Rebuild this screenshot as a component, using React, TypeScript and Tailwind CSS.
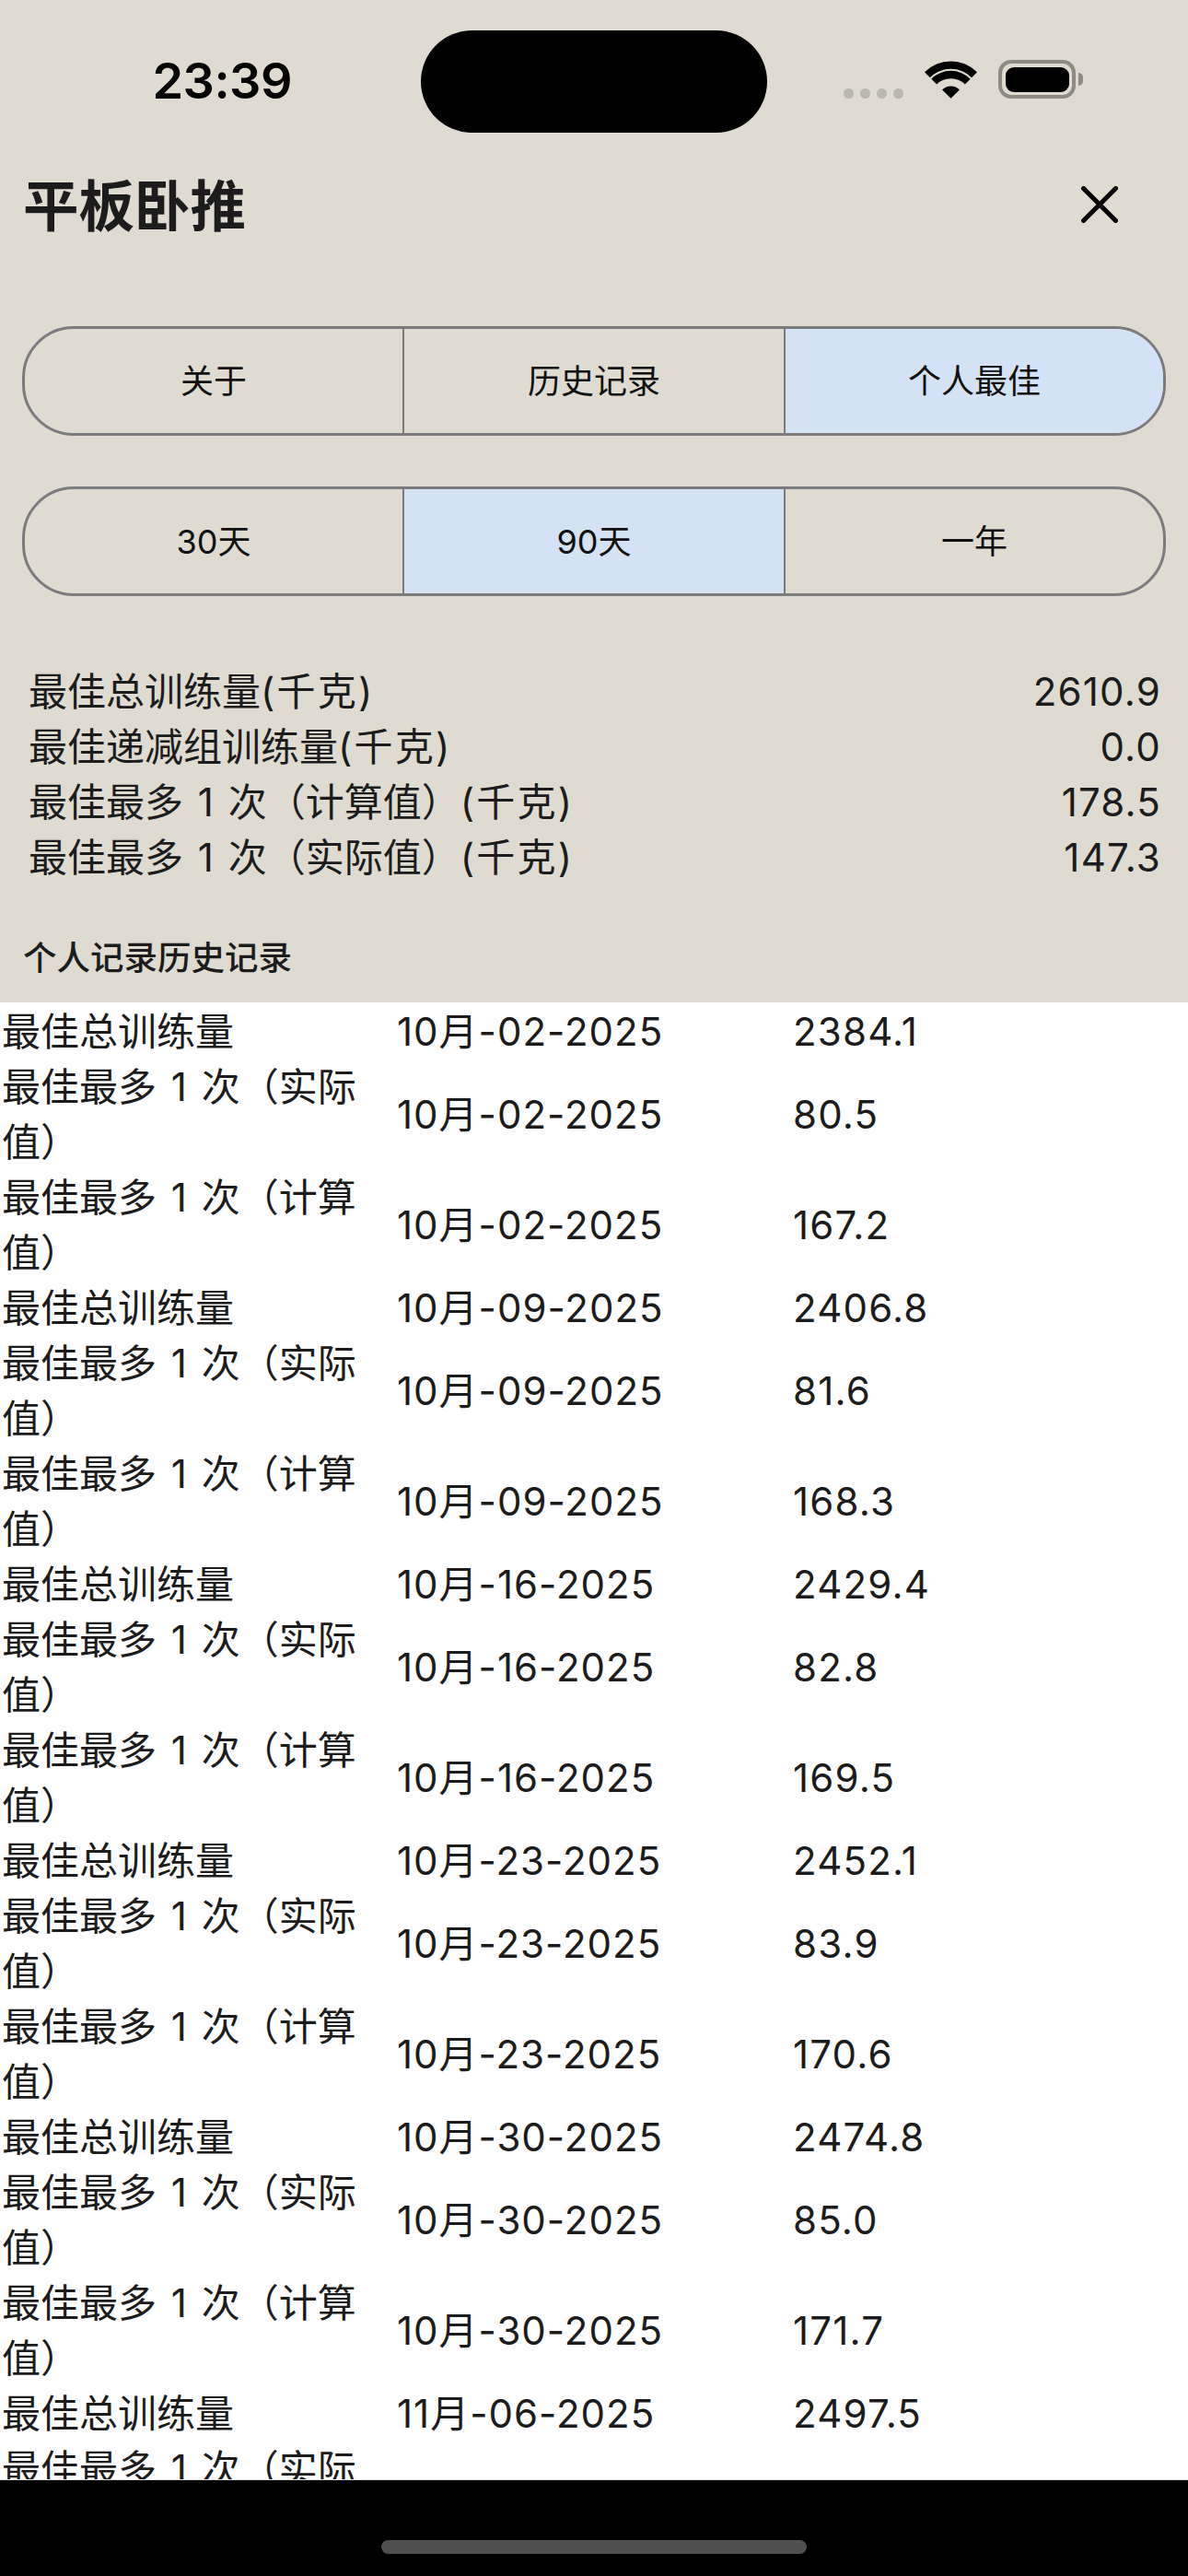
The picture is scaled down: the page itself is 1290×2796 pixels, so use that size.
const font = { fontFamily: '"Inter", "Noto Sans CJK SC", sans-serif' };

function Segments({ items, active }: { items: string[]; active: number }) {
  return (
    <div className="grid h-[119px] w-[1242px] grid-cols-[412px_414px_1fr] overflow-hidden rounded-[56px] border-[3px] border-[#7b7b7d]">
      {items.map((t, i) => (
        <div
          key={t}
          className={
            (i === active ? "bg-[#d3e2f5] " : "") +
            (i < 2 ? "border-r-2 border-[#7b7b7d] " : "") +
            "flex items-center justify-center text-[36px] text-[#111111]"
          }
        >
          {t}
        </div>
      ))}
    </div>
  );
}

function Wifi() {
  return (
    <svg width="57" height="42" viewBox="0 0 171 125" fill="#000000">
      <path d="M0 39.5A121 121 0 0 1 171 39.5L153.4 57.1A96 96 0 0 0 17.6 57.1Z" />
      <path d="M21.9 61.4A90 90 0 0 1 149.1 61.4L131.5 79A65 65 0 0 0 39.5 79Z" />
      <path d="M57.2 96.7A40 40 0 0 1 113.8 96.7L85.5 125Z" />
    </svg>
  );
}

const stats = [
  ["最佳总训练量", "2610.9"],
  ["最佳递减组训练量", "0.0"],
  ["最佳最多 1 次（计算值）", "178.5"],
  ["最佳最多 1 次（实际值）", "147.3"],
];

const rows = [
  ["最佳总训练量", "10月-02-2025", "2384.1"],
  ["最佳最多 1 次（实际值）", "10月-02-2025", "80.5"],
  ["最佳最多 1 次（计算值）", "10月-02-2025", "167.2"],
  ["最佳总训练量", "10月-09-2025", "2406.8"],
  ["最佳最多 1 次（实际值）", "10月-09-2025", "81.6"],
  ["最佳最多 1 次（计算值）", "10月-09-2025", "168.3"],
  ["最佳总训练量", "10月-16-2025", "2429.4"],
  ["最佳最多 1 次（实际值）", "10月-16-2025", "82.8"],
  ["最佳最多 1 次（计算值）", "10月-16-2025", "169.5"],
  ["最佳总训练量", "10月-23-2025", "2452.1"],
  ["最佳最多 1 次（实际值）", "10月-23-2025", "83.9"],
  ["最佳最多 1 次（计算值）", "10月-23-2025", "170.6"],
  ["最佳总训练量", "10月-30-2025", "2474.8"],
  ["最佳最多 1 次（实际值）", "10月-30-2025", "85.0"],
  ["最佳最多 1 次（计算值）", "10月-30-2025", "171.7"],
  ["最佳总训练量", "11月-06-2025", "2497.5"],
  ["最佳最多 1 次（实际值）", "11月-06-2025", "86.1"],
];

export default function App() {
  return (
    <div style={font} className="flex h-[2796px] w-[1290px] flex-col overflow-hidden bg-[#dfdbd1] text-[#1c1c1c]">
      {/* status bar */}
      <div className="flex h-[170px] shrink-0 pt-[33px]">
        <div className="flex h-[109px] w-[457px] items-center justify-end pr-[140px] text-[54px] font-semibold tracking-[-0.5px] text-black">
          23:39
        </div>
        <div className="h-[111px] w-[376px] rounded-[56px] bg-black" />
        <div className="mt-[32px] flex h-[42px] items-start pl-[83px]">
          <div className="flex h-[42px] items-end gap-[7px]">
            {[0, 1, 2, 3].map((d) => (
              <div key={d} className="h-[11px] w-[11px] rounded-full bg-[#bab7ae]" />
            ))}
          </div>
          <div className="ml-[23px]">
            <Wifi />
          </div>
          <div className="ml-[23px] flex h-[42px] items-center">
            <div className="flex h-[42px] w-[84px] items-center justify-center rounded-[14px] border-[4px] border-[#8e8b84]">
              <div className="h-[27px] w-[69px] rounded-[9px] bg-black" />
            </div>
            <div className="ml-[3px] h-[14px] w-[5px] rounded-r-full bg-[#8e8b84]" />
          </div>
        </div>
      </div>

      {/* title */}
      <div className="flex h-[108px] shrink-0 items-center justify-between pl-[25px] pr-[76px]">
        <div className="text-[60.5px] font-semibold leading-none">平板卧推</div>
        <svg className="mb-[4px]" width="40" height="40" viewBox="0 0 40 40" stroke="#000000" strokeWidth="5" strokeLinecap="round">
          <path d="M2.5 2.5L37.5 37.5M37.5 2.5L2.5 37.5" />
        </svg>
      </div>

      {/* segments */}
      <div className="mt-[76px] flex shrink-0 flex-col gap-[55px] pl-[24px]">
        <Segments items={["关于", "历史记录", "个人最佳"]} active={2} />
        <Segments items={["30天", "90天", "一年"]} active={1} />
      </div>

      {/* stats */}
      <div className="mt-[73px] shrink-0 pl-[31px] pr-[29px]">
        {stats.map(([k, v]) => (
          <div key={k} className="flex h-[60px] items-center justify-between text-[42px]">
            <span className="[word-spacing:4px]">
              {k}
              <span className="tracking-[2.2px]">(千克)</span>
            </span>
            <span className="tracking-[1.2px]">{v}</span>
          </div>
        ))}
      </div>

      <div className="mt-[50px] flex h-[60px] shrink-0 items-center pl-[25px] text-[36.5px] font-medium">个人记录历史记录</div>
      <div className="h-[18px] shrink-0" />

      {/* history */}
      <div className="min-h-0 flex-1 overflow-hidden border-b border-[#e4e4e4] bg-white pt-[2px] text-[42px] leading-[60px]">
        {rows.map((r, i) => (
          <div key={i} className="grid grid-cols-[431px_430px_429px] items-center">
            <div className="pl-[2px] pr-[1px] [word-spacing:4px]">{r[0]}</div>
            <div className="tracking-[1px]">{r[1]}</div>
            <div className="tracking-[1.2px]">{r[2]}</div>
          </div>
        ))}
      </div>

      {/* home area */}
      <div className="flex h-[104px] shrink-0 justify-center bg-black pt-[65px]">
        <div className="h-[15px] w-[462px] rounded-full bg-[#4f4f4f]" />
      </div>
    </div>
  );
}
